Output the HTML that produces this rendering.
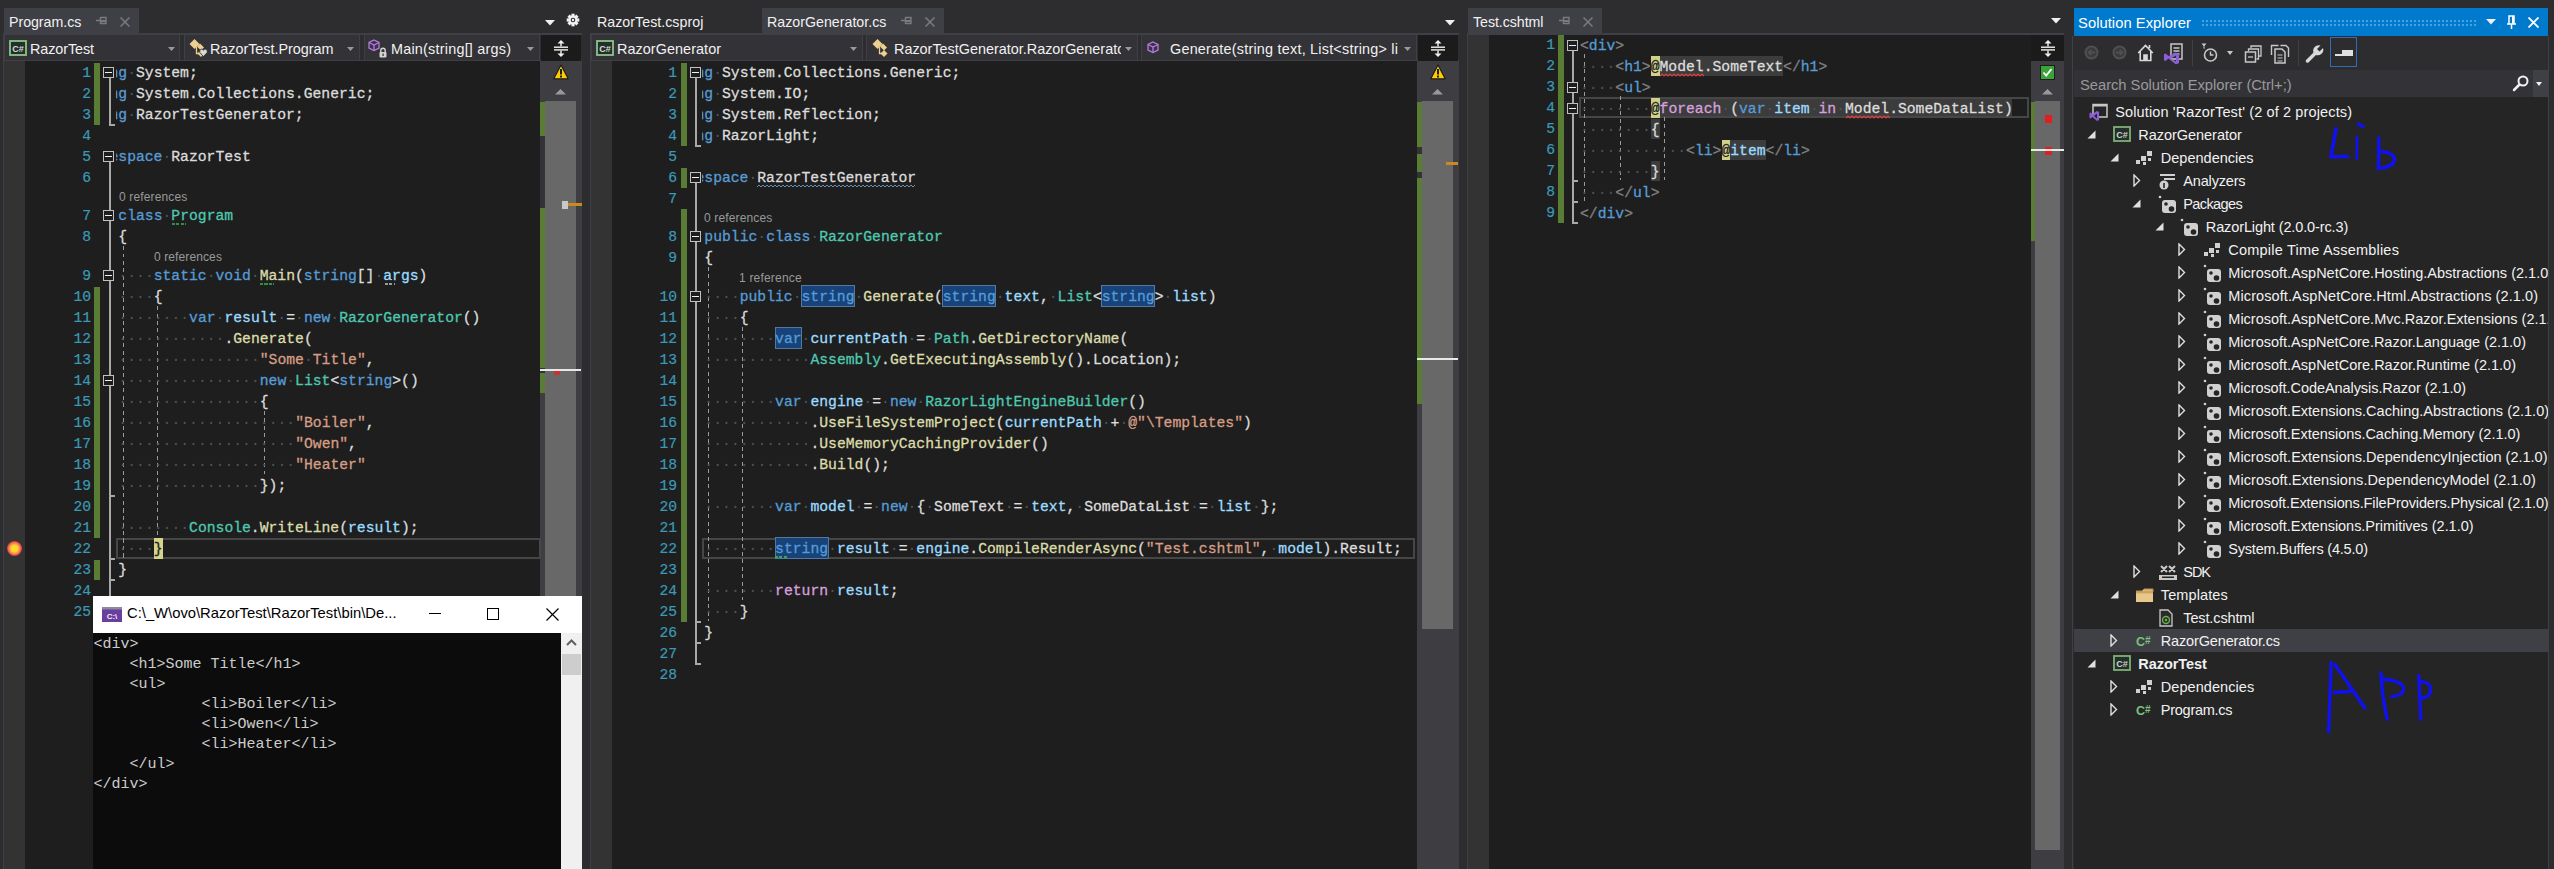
<!DOCTYPE html><html><head><meta charset="utf-8"><style>
html,body{margin:0;padding:0;}
body{width:2554px;height:869px;background:#2D2D30;position:relative;overflow:hidden;font-family:"Liberation Sans",sans-serif;}
div{box-sizing:border-box;}
.r{position:absolute;}
.clip{position:absolute;overflow:hidden;}
.cl{position:absolute;white-space:pre;font-family:"Liberation Mono",monospace;font-size:15.4px;transform:scaleX(0.95563);transform-origin:0 0;line-height:21px;height:21px;color:#DCDCDC;-webkit-text-stroke:0.3px currentColor;}
.cl i{font-style:normal;color:#4A5656;-webkit-text-stroke:0;}
.t{position:absolute;white-space:pre;line-height:1;}
.ln{position:absolute;font-family:"Liberation Mono",monospace;font-size:14.667px;line-height:21px;color:#3A9AB8;text-align:right;width:40px;-webkit-text-stroke:0.2px currentColor;}
.lens{position:absolute;white-space:pre;font-size:12px;color:#999999;line-height:1;}
</style></head><body>

<div class="r" style="left:4px;top:8px;width:135px;height:25px;background:#3F3F46;"></div>
<div class="t" style="left:9px;top:15px;font-size:14.2px;color:#F1F1F1;letter-spacing:-0.026px;">Program.cs</div>
<svg class="r" style="left:96px;top:16px;" width="11" height="9" viewBox="0 0 11 9"><path d="M0 4.5H4M4.5 1V8M4.5 1.5H10V7.5H4.5" stroke="#7A7A80" stroke-width="1.4" fill="none"/><rect x="5" y="4" width="5" height="2" fill="#7A7A80"/></svg>
<svg class="r" style="left:120px;top:17px;" width="10" height="10" viewBox="0 0 10 10"><path d="M0.5 0.5L9.5 9.5M9.5 0.5L0.5 9.5" stroke="#7A7A80" stroke-width="1.5"/></svg>
<svg class="r" style="left:545px;top:20px;" width="10" height="6" viewBox="0 0 10 6"><polygon points="0,0 10,0 5,5.5" fill="#F1F1F1"/></svg>
<svg class="r" style="left:566px;top:13px;" width="14" height="14" viewBox="0 0 14 14"><g transform="translate(7 7)"><rect x="-1.6" y="-6.3" width="3.2" height="3.5" fill="#F1F1F1" transform="rotate(0)"/><rect x="-1.6" y="-6.3" width="3.2" height="3.5" fill="#F1F1F1" transform="rotate(45)"/><rect x="-1.6" y="-6.3" width="3.2" height="3.5" fill="#F1F1F1" transform="rotate(90)"/><rect x="-1.6" y="-6.3" width="3.2" height="3.5" fill="#F1F1F1" transform="rotate(135)"/><rect x="-1.6" y="-6.3" width="3.2" height="3.5" fill="#F1F1F1" transform="rotate(180)"/><rect x="-1.6" y="-6.3" width="3.2" height="3.5" fill="#F1F1F1" transform="rotate(225)"/><rect x="-1.6" y="-6.3" width="3.2" height="3.5" fill="#F1F1F1" transform="rotate(270)"/><rect x="-1.6" y="-6.3" width="3.2" height="3.5" fill="#F1F1F1" transform="rotate(315)"/><circle r="4.4" fill="#F1F1F1"/><circle r="2.3" fill="#2D2D30"/><circle r="1.2" fill="#F1F1F1"/></g></svg>
<div class="r" style="left:4px;top:33px;width:578px;height:28px;background:#2D2D30;"></div>
<div class="r" style="left:4px;top:33px;width:578px;height:2px;background:#3F3F46;"></div>
<div class="r" style="left:4px;top:60px;width:578px;height:1px;background:#3F3F46;"></div>
<div class="r" style="left:4px;top:35px;width:176px;height:25px;background:#333337;border-left:1px solid #3F3F46;border-right:1px solid #3F3F46"></div>
<div class="r" style="left:184px;top:35px;width:176px;height:25px;background:#333337;border-left:1px solid #3F3F46;border-right:1px solid #3F3F46"></div>
<div class="r" style="left:364px;top:35px;width:176px;height:25px;background:#333337;border-left:1px solid #3F3F46;border-right:1px solid #3F3F46"></div>
<svg class="r" style="left:9px;top:40px;" width="18" height="16" viewBox="0 0 18 16"><rect x="1" y="1" width="16" height="14" fill="#23302A" stroke="#8BC48A" stroke-width="1.8"/><text x="9" y="11.5" font-family="Liberation Sans" font-size="9" font-weight="bold" fill="#D8D8D8" text-anchor="middle">C#</text></svg>
<div class="t" style="left:30px;top:42px;font-size:14.4px;color:#F1F1F1;letter-spacing:-0.098px;">RazorTest</div>
<svg class="r" style="left:168px;top:47px;" width="7" height="4" viewBox="0 0 7 4"><polygon points="0,0 7,0 3.5,4" fill="#999999"/></svg>
<svg class="r" style="left:188px;top:38px;" width="20" height="20" viewBox="0 0 20 20"><g fill="#EDD08F"><path d="M1.5 6L6.5 1L11.5 6L6.5 11Z"/><path d="M12 5.5L16 9.5L13 12.5L9 8.5Z"/><path d="M13 12L16.5 15.5L13 19L9.5 15.5Z"/></g><path d="M8.5 9V15.5H11" stroke="#EDD08F" stroke-width="1.3" fill="none"/></svg>
<svg class="r" style="left:199px;top:48px;" width="9" height="9" viewBox="0 0 9 9"><path d="M4.5 8.5L0.8 4.5Q0 2 2.2 1.2Q3.8 0.8 4.5 2.3Q5.2 0.8 6.8 1.2Q9 2 8.2 4.5Z" fill="#D8D8D8" stroke="#252526" stroke-width="0.8"/></svg>
<div class="t" style="left:210px;top:42px;font-size:14.4px;color:#F1F1F1;letter-spacing:-0.036px;">RazorTest.Program</div>
<svg class="r" style="left:347px;top:47px;" width="7" height="4" viewBox="0 0 7 4"><polygon points="0,0 7,0 3.5,4" fill="#999999"/></svg>
<svg class="r" style="left:368px;top:39px;" width="20" height="19" viewBox="0 0 20 19"><g stroke="#B180D7" stroke-width="1.3" fill="#3E2D52"><path d="M6 1L11 3.5V9L6 11.5L1 9V3.5Z"/><path d="M1 3.5L6 6L11 3.5M6 6V11.5" fill="none"/></g><rect x="11.5" y="13" width="7" height="5.5" rx="1" fill="#D4D4D4"/><path d="M12.8 13V11.5A2.2 2.2 0 0 1 17.2 11.5V13" stroke="#D4D4D4" stroke-width="1.4" fill="none"/><rect x="14.5" y="14.5" width="1.2" height="2.5" fill="#333"/></svg>
<div class="t" style="left:391px;top:42px;font-size:14.4px;color:#F1F1F1;letter-spacing:0.224px;">Main(string[] args)</div>
<svg class="r" style="left:527px;top:47px;" width="7" height="4" viewBox="0 0 7 4"><polygon points="0,0 7,0 3.5,4" fill="#999999"/></svg>
<div class="r" style="left:541px;top:35px;width:40px;height:26px;background:#1B1B1C;"></div>
<svg class="r" style="left:553.0px;top:39.5px;" width="16" height="17" viewBox="0 0 16 17"><g fill="#F1F1F1"><rect x="1" y="6.5" width="14" height="1.4"/><rect x="1" y="9.2" width="14" height="1.4"/><rect x="7.3" y="2" width="1.4" height="4.5"/><rect x="7.3" y="10.6" width="1.4" height="4.5"/><polygon points="8,0 4.5,3.5 11.5,3.5"/><polygon points="8,17 4.5,13.5 11.5,13.5"/></g></svg>
<div class="r" style="left:4px;top:61px;width:21px;height:808px;background:#333333;"></div>
<div class="r" style="left:25px;top:61px;width:515px;height:808px;background:#1E1E1E;"></div>
<div class="r" style="left:540px;top:61px;width:42px;height:808px;background:#3E3E42;"></div>
<svg class="r" style="left:553px;top:64px;" width="16" height="16" viewBox="0 0 16 16"><polygon points="8,1 15.2,14.8 0.8,14.8" fill="#FFCC00" stroke="#1E1E1E" stroke-width="1.2" stroke-linejoin="round"/><rect x="7" y="5" width="2" height="5.5" fill="#1E1E1E"/><rect x="7" y="11.5" width="2" height="2" fill="#1E1E1E"/></svg>
<svg class="r" style="left:555px;top:89px;" width="11" height="6" viewBox="0 0 11 6"><polygon points="5.5,0 11,5.5 0,5.5" fill="#999999"/></svg>
<div class="r" style="left:545px;top:101px;width:31px;height:768px;background:#686868;"></div>
<div class="r" style="left:540px;top:102px;width:5px;height:34px;background:#5A7D35;"></div>
<div class="r" style="left:540px;top:136px;width:5px;height:72px;background:#333337;"></div>
<div class="r" style="left:540px;top:208px;width:5px;height:185px;background:#5A7D35;"></div>
<div class="r" style="left:540px;top:368px;width:5px;height:5px;background:#333337;"></div>
<div class="r" style="left:562px;top:201px;width:6px;height:8px;background:#C8C8C8;"></div>
<div class="r" style="left:568px;top:203px;width:14px;height:3px;background:#CA8A1E;"></div>
<div class="r" style="left:540px;top:368.5px;width:41px;height:2px;background:#E8E8E8;"></div>
<div class="r" style="left:554px;top:371px;width:6px;height:4px;background:#C83232;"></div>
<div class="ln" style="left:51px;top:63px">1</div>
<div class="ln" style="left:51px;top:84px">2</div>
<div class="ln" style="left:51px;top:105px">3</div>
<div class="ln" style="left:51px;top:126px">4</div>
<div class="ln" style="left:51px;top:147px">5</div>
<div class="ln" style="left:51px;top:168px">6</div>
<div class="ln" style="left:51px;top:206px">7</div>
<div class="ln" style="left:51px;top:227px">8</div>
<div class="ln" style="left:51px;top:266px">9</div>
<div class="ln" style="left:51px;top:287px">10</div>
<div class="ln" style="left:51px;top:308px">11</div>
<div class="ln" style="left:51px;top:329px">12</div>
<div class="ln" style="left:51px;top:350px">13</div>
<div class="ln" style="left:51px;top:371px">14</div>
<div class="ln" style="left:51px;top:392px">15</div>
<div class="ln" style="left:51px;top:413px">16</div>
<div class="ln" style="left:51px;top:434px">17</div>
<div class="ln" style="left:51px;top:455px">18</div>
<div class="ln" style="left:51px;top:476px">19</div>
<div class="ln" style="left:51px;top:497px">20</div>
<div class="ln" style="left:51px;top:518px">21</div>
<div class="ln" style="left:51px;top:539px">22</div>
<div class="ln" style="left:51px;top:560px">23</div>
<div class="ln" style="left:51px;top:581px">24</div>
<div class="ln" style="left:51px;top:602px">25</div>
<div class="r" style="left:94px;top:62.5px;width:6px;height:62.5px;background:#5A7D35;"></div>
<div class="r" style="left:94px;top:286.5px;width:6px;height:251.5px;background:#5A7D35;"></div>
<div class="r" style="left:94px;top:559.5px;width:6px;height:20.5px;background:#5A7D35;"></div>
<div class="r" style="left:115.5px;top:538px;width:425px;height:21px;border:2px solid #464646"></div>
<div class="r" style="left:154px;top:538px;width:9px;height:21px;background:#D4D48A;"></div>
<div class="r" style="left:122.5px;top:246px;width:1.5px;height:312px;background:repeating-linear-gradient(#9A9A9A 0 4px, transparent 4px 7.5px)"></div>
<div class="r" style="left:156.5px;top:306px;width:1.5px;height:231px;background:repeating-linear-gradient(#9A9A9A 0 4px, transparent 4px 7.5px)"></div>
<div class="r" style="left:263.5px;top:411px;width:1.5px;height:63px;background:repeating-linear-gradient(#9A9A9A 0 4px, transparent 4px 7.5px)"></div>
<div class="clip" style="left:116px;top:61px;width:424px;height:808px">
<div class="cl" style="left:-32.6px;top:2px"><span style="color:#569CD6">using</span><i>·</i>System;</div>
<div class="cl" style="left:-32.6px;top:23px"><span style="color:#569CD6">using</span><i>·</i>System.Collections.Generic;</div>
<div class="cl" style="left:-32.6px;top:44px"><span style="color:#569CD6">using</span><i>·</i>RazorTestGenerator;</div>
<div class="cl" style="left:-32.6px;top:86px"><span style="color:#569CD6">namespace</span><i>·</i>RazorTest</div>
<div class="cl" style="left:-32.6px;top:107px">{</div>
<div class="cl" style="left:-32.6px;top:145px"><i>·</i><i>·</i><i>·</i><i>·</i><span style="color:#569CD6">class</span><i>·</i><span style="color:#4EC9B0">Program</span></div>
<div class="cl" style="left:-32.6px;top:166px"><i>·</i><i>·</i><i>·</i><i>·</i>{</div>
<div class="cl" style="left:-32.6px;top:205px"><i>·</i><i>·</i><i>·</i><i>·</i><i>·</i><i>·</i><i>·</i><i>·</i><span style="color:#569CD6">static</span><i>·</i><span style="color:#569CD6">void</span><i>·</i><span style="color:#DCDCAA">Main</span>(<span style="color:#569CD6">string</span>[]<i>·</i><span style="color:#9CDCFE">args</span>)</div>
<div class="cl" style="left:-32.6px;top:226px"><i>·</i><i>·</i><i>·</i><i>·</i><i>·</i><i>·</i><i>·</i><i>·</i>{</div>
<div class="cl" style="left:-32.6px;top:247px"><i>·</i><i>·</i><i>·</i><i>·</i><i>·</i><i>·</i><i>·</i><i>·</i><i>·</i><i>·</i><i>·</i><i>·</i><span style="color:#569CD6">var</span><i>·</i><span style="color:#9CDCFE">result</span><i>·</i>=<i>·</i><span style="color:#569CD6">new</span><i>·</i><span style="color:#4EC9B0">RazorGenerator</span>()</div>
<div class="cl" style="left:-32.6px;top:268px"><i>·</i><i>·</i><i>·</i><i>·</i><i>·</i><i>·</i><i>·</i><i>·</i><i>·</i><i>·</i><i>·</i><i>·</i><i>·</i><i>·</i><i>·</i><i>·</i>.<span style="color:#DCDCAA">Generate</span>(</div>
<div class="cl" style="left:-32.6px;top:289px"><i>·</i><i>·</i><i>·</i><i>·</i><i>·</i><i>·</i><i>·</i><i>·</i><i>·</i><i>·</i><i>·</i><i>·</i><i>·</i><i>·</i><i>·</i><i>·</i><i>·</i><i>·</i><i>·</i><i>·</i><span style="color:#D69D85">"Some</span><i>·</i><span style="color:#D69D85">Title"</span>,</div>
<div class="cl" style="left:-32.6px;top:310px"><i>·</i><i>·</i><i>·</i><i>·</i><i>·</i><i>·</i><i>·</i><i>·</i><i>·</i><i>·</i><i>·</i><i>·</i><i>·</i><i>·</i><i>·</i><i>·</i><i>·</i><i>·</i><i>·</i><i>·</i><span style="color:#569CD6">new</span><i>·</i><span style="color:#4EC9B0">List</span>&lt;<span style="color:#569CD6">string</span>&gt;()</div>
<div class="cl" style="left:-32.6px;top:331px"><i>·</i><i>·</i><i>·</i><i>·</i><i>·</i><i>·</i><i>·</i><i>·</i><i>·</i><i>·</i><i>·</i><i>·</i><i>·</i><i>·</i><i>·</i><i>·</i><i>·</i><i>·</i><i>·</i><i>·</i>{</div>
<div class="cl" style="left:-32.6px;top:352px"><i>·</i><i>·</i><i>·</i><i>·</i><i>·</i><i>·</i><i>·</i><i>·</i><i>·</i><i>·</i><i>·</i><i>·</i><i>·</i><i>·</i><i>·</i><i>·</i><i>·</i><i>·</i><i>·</i><i>·</i><i>·</i><i>·</i><i>·</i><i>·</i><span style="color:#D69D85">"Boiler"</span>,</div>
<div class="cl" style="left:-32.6px;top:373px"><i>·</i><i>·</i><i>·</i><i>·</i><i>·</i><i>·</i><i>·</i><i>·</i><i>·</i><i>·</i><i>·</i><i>·</i><i>·</i><i>·</i><i>·</i><i>·</i><i>·</i><i>·</i><i>·</i><i>·</i><i>·</i><i>·</i><i>·</i><i>·</i><span style="color:#D69D85">"Owen"</span>,</div>
<div class="cl" style="left:-32.6px;top:394px"><i>·</i><i>·</i><i>·</i><i>·</i><i>·</i><i>·</i><i>·</i><i>·</i><i>·</i><i>·</i><i>·</i><i>·</i><i>·</i><i>·</i><i>·</i><i>·</i><i>·</i><i>·</i><i>·</i><i>·</i><i>·</i><i>·</i><i>·</i><i>·</i><span style="color:#D69D85">"Heater"</span></div>
<div class="cl" style="left:-32.6px;top:415px"><i>·</i><i>·</i><i>·</i><i>·</i><i>·</i><i>·</i><i>·</i><i>·</i><i>·</i><i>·</i><i>·</i><i>·</i><i>·</i><i>·</i><i>·</i><i>·</i><i>·</i><i>·</i><i>·</i><i>·</i>});</div>
<div class="cl" style="left:-32.6px;top:457px"><i>·</i><i>·</i><i>·</i><i>·</i><i>·</i><i>·</i><i>·</i><i>·</i><i>·</i><i>·</i><i>·</i><i>·</i><span style="color:#4EC9B0">Console</span>.<span style="color:#DCDCAA">WriteLine</span>(<span style="color:#9CDCFE">result</span>);</div>
<div class="cl" style="left:-32.6px;top:478px"><i>·</i><i>·</i><i>·</i><i>·</i><i>·</i><i>·</i><i>·</i><i>·</i><span style="color:#1E1E1E">}</span></div>
<div class="cl" style="left:-32.6px;top:499px"><i>·</i><i>·</i><i>·</i><i>·</i>}</div>
<div class="cl" style="left:-32.6px;top:520px">}</div>
</div>
<div class="r" style="left:109px;top:77.8px;width:2px;height:46.2px;background:#A8A8A8;"></div>
<div class="r" style="left:109px;top:124px;width:5.5px;height:1.5px;background:#A8A8A8;"></div>
<div class="r" style="left:109px;top:161.8px;width:2px;height:438.2px;background:#A8A8A8;"></div>
<div class="r" style="left:109px;top:600px;width:5.5px;height:1.5px;background:#A8A8A8;"></div>
<div class="r" style="left:109px;top:220.8px;width:2px;height:358.2px;background:#A8A8A8;"></div>
<div class="r" style="left:109px;top:579px;width:5.5px;height:1.5px;background:#A8A8A8;"></div>
<div class="r" style="left:109px;top:280.8px;width:2px;height:277.2px;background:#A8A8A8;"></div>
<div class="r" style="left:109px;top:558px;width:5.5px;height:1.5px;background:#A8A8A8;"></div>
<div class="r" style="left:109px;top:385.8px;width:2px;height:109.19999999999999px;background:#A8A8A8;"></div>
<div class="r" style="left:109px;top:495px;width:5.5px;height:1.5px;background:#A8A8A8;"></div>
<div class="r" style="left:103.2px;top:66.8px;width:11px;height:11px;border:1.3px solid #C0C0C0;background:#1E1E1E"></div>
<div class="r" style="left:105.2px;top:71.55px;width:7px;height:1.5px;background:#F0F0F0;"></div>
<div class="r" style="left:103.2px;top:150.8px;width:11px;height:11px;border:1.3px solid #C0C0C0;background:#1E1E1E"></div>
<div class="r" style="left:105.2px;top:155.55px;width:7px;height:1.5px;background:#F0F0F0;"></div>
<div class="r" style="left:103.2px;top:209.8px;width:11px;height:11px;border:1.3px solid #C0C0C0;background:#1E1E1E"></div>
<div class="r" style="left:105.2px;top:214.55px;width:7px;height:1.5px;background:#F0F0F0;"></div>
<div class="r" style="left:103.2px;top:269.8px;width:11px;height:11px;border:1.3px solid #C0C0C0;background:#1E1E1E"></div>
<div class="r" style="left:105.2px;top:274.55px;width:7px;height:1.5px;background:#F0F0F0;"></div>
<div class="r" style="left:103.2px;top:374.8px;width:11px;height:11px;border:1.3px solid #C0C0C0;background:#1E1E1E"></div>
<div class="r" style="left:105.2px;top:379.55px;width:7px;height:1.5px;background:#F0F0F0;"></div>
<div class="lens" style="left:119px;top:191px;letter-spacing:0.145px;">0 references</div>
<div class="lens" style="left:154px;top:251px;letter-spacing:0.109px;">0 references</div>
<div class="r" style="left:172px;top:223px;width:14px;height:2px;background:repeating-linear-gradient(90deg,#2E9040 0 3px,transparent 3px 4.5px)"></div>
<div class="r" style="left:260px;top:283px;width:14px;height:2px;background:repeating-linear-gradient(90deg,#2E9040 0 3px,transparent 3px 4.5px)"></div>
<div class="r" style="left:385px;top:283px;width:10px;height:2px;background:repeating-linear-gradient(90deg,#9A9A9A 0 3px,transparent 3px 4.5px)"></div>
<svg class="r" style="left:6px;top:540px;" width="17" height="17" viewBox="0 0 17 17"><defs><radialGradient id="bp"><stop offset="0" stop-color="#FFE800"/><stop offset="0.45" stop-color="#FFD040"/><stop offset="0.8" stop-color="#F07050"/><stop offset="1" stop-color="#D83030"/></radialGradient></defs><circle cx="8.5" cy="8.5" r="7.5" fill="url(#bp)"/></svg>
<div class="r" style="left:93px;top:596px;width:489px;height:273px;background:#FFFFFF;"></div>
<div class="r" style="left:93px;top:633px;width:468px;height:236px;background:#0C0C0C;"></div>
<div class="r" style="left:561px;top:633px;width:21px;height:236px;background:#F0F0F0;"></div>
<svg class="r" style="left:566px;top:639px;" width="11" height="7" viewBox="0 0 11 7"><path d="M1 6L5.5 1.5L10 6" stroke="#606060" stroke-width="2" fill="none"/></svg>
<div class="r" style="left:562px;top:654px;width:19px;height:21px;background:#CDCDCD;"></div>
<svg class="r" style="left:102px;top:607px;" width="20" height="15" viewBox="0 0 20 15"><rect width="20" height="15" fill="#6A3E9E"/><rect width="20" height="2.5" fill="#8A8AA0"/><text x="10" y="12" font-family="Liberation Sans" font-size="8" font-weight="bold" fill="#F0F0F0" text-anchor="middle">C:\</text></svg>
<div class="t" style="left:127px;top:606px;font-size:14.8px;color:#000000;letter-spacing:-0.006px;">C:\_W\ovo\RazorTest\RazorTest\bin\De...</div>
<div class="r" style="left:429px;top:613px;width:12px;height:1.2px;background:#000000;"></div>
<div class="r" style="left:487px;top:608px;width:12px;height:12px;border:1.2px solid #000"></div>
<svg class="r" style="left:546px;top:608px;" width="13" height="13" viewBox="0 0 13 13"><path d="M0.5 0.5L12.5 12.5M12.5 0.5L0.5 12.5" stroke="#000000" stroke-width="1.2"/></svg>
<div class="t" style="left:93.5px;top:637px;font-family:'Liberation Mono';font-size:15px;color:#CCCCCC">&lt;div&gt;</div>
<div class="t" style="left:93.5px;top:657px;font-family:'Liberation Mono';font-size:15px;color:#CCCCCC">    &lt;h1&gt;Some Title&lt;/h1&gt;</div>
<div class="t" style="left:93.5px;top:677px;font-family:'Liberation Mono';font-size:15px;color:#CCCCCC">    &lt;ul&gt;</div>
<div class="t" style="left:93.5px;top:697px;font-family:'Liberation Mono';font-size:15px;color:#CCCCCC">            &lt;li&gt;Boiler&lt;/li&gt;</div>
<div class="t" style="left:93.5px;top:717px;font-family:'Liberation Mono';font-size:15px;color:#CCCCCC">            &lt;li&gt;Owen&lt;/li&gt;</div>
<div class="t" style="left:93.5px;top:737px;font-family:'Liberation Mono';font-size:15px;color:#CCCCCC">            &lt;li&gt;Heater&lt;/li&gt;</div>
<div class="t" style="left:93.5px;top:757px;font-family:'Liberation Mono';font-size:15px;color:#CCCCCC">    &lt;/ul&gt;</div>
<div class="t" style="left:93.5px;top:777px;font-family:'Liberation Mono';font-size:15px;color:#CCCCCC">&lt;/div&gt;</div>
<div class="t" style="left:597px;top:15px;font-size:14.2px;color:#F1F1F1;letter-spacing:0.043px;">RazorTest.csproj</div>
<div class="r" style="left:762px;top:8px;width:182px;height:25px;background:#3F3F46;"></div>
<div class="t" style="left:767px;top:15px;font-size:14.2px;color:#F1F1F1;letter-spacing:0.020px;">RazorGenerator.cs</div>
<svg class="r" style="left:901px;top:16px;" width="11" height="9" viewBox="0 0 11 9"><path d="M0 4.5H4M4.5 1V8M4.5 1.5H10V7.5H4.5" stroke="#7A7A80" stroke-width="1.4" fill="none"/><rect x="5" y="4" width="5" height="2" fill="#7A7A80"/></svg>
<svg class="r" style="left:925px;top:17px;" width="10" height="10" viewBox="0 0 10 10"><path d="M0.5 0.5L9.5 9.5M9.5 0.5L0.5 9.5" stroke="#7A7A80" stroke-width="1.5"/></svg>
<svg class="r" style="left:1445px;top:20px;" width="10" height="6" viewBox="0 0 10 6"><polygon points="0,0 10,0 5,5.5" fill="#F1F1F1"/></svg>
<div class="r" style="left:591px;top:33px;width:868px;height:28px;background:#2D2D30;"></div>
<div class="r" style="left:591px;top:33px;width:868px;height:2px;background:#3F3F46;"></div>
<div class="r" style="left:591px;top:60px;width:868px;height:1px;background:#3F3F46;"></div>
<div class="r" style="left:591px;top:35px;width:272px;height:25px;background:#333337;border-left:1px solid #3F3F46;border-right:1px solid #3F3F46"></div>
<div class="r" style="left:866px;top:35px;width:272px;height:25px;background:#333337;border-left:1px solid #3F3F46;border-right:1px solid #3F3F46"></div>
<div class="r" style="left:1141px;top:35px;width:276px;height:25px;background:#333337;border-left:1px solid #3F3F46;border-right:1px solid #3F3F46"></div>
<svg class="r" style="left:596px;top:40px;" width="18" height="16" viewBox="0 0 18 16"><rect x="1" y="1" width="16" height="14" fill="#23302A" stroke="#8BC48A" stroke-width="1.8"/><text x="9" y="11.5" font-family="Liberation Sans" font-size="9" font-weight="bold" fill="#D8D8D8" text-anchor="middle">C#</text></svg>
<div class="t" style="left:617px;top:42px;font-size:14.4px;color:#F1F1F1;letter-spacing:0.062px;">RazorGenerator</div>
<svg class="r" style="left:850px;top:47px;" width="7" height="4" viewBox="0 0 7 4"><polygon points="0,0 7,0 3.5,4" fill="#999999"/></svg>
<svg class="r" style="left:871px;top:38px;" width="20" height="20" viewBox="0 0 20 20"><g fill="#EDD08F"><path d="M1.5 6L6.5 1L11.5 6L6.5 11Z"/><path d="M12 5.5L16 9.5L13 12.5L9 8.5Z"/><path d="M13 12L16.5 15.5L13 19L9.5 15.5Z"/></g><path d="M8.5 9V15.5H11" stroke="#EDD08F" stroke-width="1.3" fill="none"/></svg>
<div class="clip" style="left:894px;top:38px;width:227px;height:20px">
<div class="t" style="left:0px;top:4px;font-size:14.4px;color:#F1F1F1;">RazorTestGenerator.RazorGeneratc</div>
</div>
<svg class="r" style="left:1125px;top:47px;" width="7" height="4" viewBox="0 0 7 4"><polygon points="0,0 7,0 3.5,4" fill="#999999"/></svg>
<svg class="r" style="left:1147px;top:41px;" width="20" height="19" viewBox="0 0 20 19"><g stroke="#B180D7" stroke-width="1.3" fill="#3E2D52"><path d="M6 1L11 3.5V9L6 11.5L1 9V3.5Z"/><path d="M1 3.5L6 6L11 3.5M6 6V11.5" fill="none"/></g></svg>
<div class="t" style="left:1170px;top:42px;font-size:14.4px;color:#F1F1F1;letter-spacing:0.223px;">Generate(string text, List&lt;string&gt; li</div>
<svg class="r" style="left:1404px;top:47px;" width="7" height="4" viewBox="0 0 7 4"><polygon points="0,0 7,0 3.5,4" fill="#999999"/></svg>
<div class="r" style="left:1418px;top:35px;width:40px;height:26px;background:#1B1B1C;"></div>
<svg class="r" style="left:1430.0px;top:39.5px;" width="16" height="17" viewBox="0 0 16 17"><g fill="#F1F1F1"><rect x="1" y="6.5" width="14" height="1.4"/><rect x="1" y="9.2" width="14" height="1.4"/><rect x="7.3" y="2" width="1.4" height="4.5"/><rect x="7.3" y="10.6" width="1.4" height="4.5"/><polygon points="8,0 4.5,3.5 11.5,3.5"/><polygon points="8,17 4.5,13.5 11.5,13.5"/></g></svg>
<div class="r" style="left:591px;top:61px;width:21px;height:808px;background:#333333;"></div>
<div class="r" style="left:612px;top:61px;width:805px;height:808px;background:#1E1E1E;"></div>
<div class="r" style="left:1417px;top:61px;width:42px;height:808px;background:#3E3E42;"></div>
<svg class="r" style="left:1430px;top:64px;" width="16" height="16" viewBox="0 0 16 16"><polygon points="8,1 15.2,14.8 0.8,14.8" fill="#FFCC00" stroke="#1E1E1E" stroke-width="1.2" stroke-linejoin="round"/><rect x="7" y="5" width="2" height="5.5" fill="#1E1E1E"/><rect x="7" y="11.5" width="2" height="2" fill="#1E1E1E"/></svg>
<svg class="r" style="left:1432px;top:89px;" width="11" height="6" viewBox="0 0 11 6"><polygon points="5.5,0 11,5.5 0,5.5" fill="#999999"/></svg>
<div class="r" style="left:1422px;top:101px;width:31px;height:528px;background:#686868;"></div>
<div class="r" style="left:1417px;top:102px;width:5px;height:302px;background:#5A7D35;"></div>
<div class="r" style="left:1417px;top:147px;width:5px;height:7px;background:#333337;"></div>
<div class="r" style="left:1417px;top:172px;width:5px;height:6px;background:#333337;"></div>
<div class="r" style="left:1446px;top:162px;width:12px;height:3px;background:#CA8A1E;"></div>
<div class="r" style="left:1417px;top:358px;width:41px;height:2px;background:#E8E8E8;"></div>
<div class="ln" style="left:637px;top:63px">1</div>
<div class="ln" style="left:637px;top:84px">2</div>
<div class="ln" style="left:637px;top:105px">3</div>
<div class="ln" style="left:637px;top:126px">4</div>
<div class="ln" style="left:637px;top:147px">5</div>
<div class="ln" style="left:637px;top:168px">6</div>
<div class="ln" style="left:637px;top:189px">7</div>
<div class="ln" style="left:637px;top:227px">8</div>
<div class="ln" style="left:637px;top:248px">9</div>
<div class="ln" style="left:637px;top:287px">10</div>
<div class="ln" style="left:637px;top:308px">11</div>
<div class="ln" style="left:637px;top:329px">12</div>
<div class="ln" style="left:637px;top:350px">13</div>
<div class="ln" style="left:637px;top:371px">14</div>
<div class="ln" style="left:637px;top:392px">15</div>
<div class="ln" style="left:637px;top:413px">16</div>
<div class="ln" style="left:637px;top:434px">17</div>
<div class="ln" style="left:637px;top:455px">18</div>
<div class="ln" style="left:637px;top:476px">19</div>
<div class="ln" style="left:637px;top:497px">20</div>
<div class="ln" style="left:637px;top:518px">21</div>
<div class="ln" style="left:637px;top:539px">22</div>
<div class="ln" style="left:637px;top:560px">23</div>
<div class="ln" style="left:637px;top:581px">24</div>
<div class="ln" style="left:637px;top:602px">25</div>
<div class="ln" style="left:637px;top:623px">26</div>
<div class="ln" style="left:637px;top:644px">27</div>
<div class="ln" style="left:637px;top:665px">28</div>
<div class="r" style="left:681px;top:62.5px;width:6px;height:83.5px;background:#5A7D35;"></div>
<div class="r" style="left:681px;top:167.5px;width:6px;height:20.5px;background:#5A7D35;"></div>
<div class="r" style="left:681px;top:226.5px;width:6px;height:395.5px;background:#5A7D35;"></div>
<div class="r" style="left:681px;top:209px;width:6px;height:18px;background:#5A7D35;"></div>
<div class="r" style="left:702px;top:538px;width:713px;height:21px;border:2px solid #464646"></div>
<div class="r" style="left:801px;top:285px;width:54px;height:22px;background:#17427A;border:1px solid #56779E"></div>
<div class="r" style="left:942.2px;top:285px;width:54px;height:22px;background:#17427A;border:1px solid #56779E"></div>
<div class="r" style="left:1101.2px;top:285px;width:54px;height:22px;background:#17427A;border:1px solid #56779E"></div>
<div class="r" style="left:774.5px;top:327px;width:27.5px;height:22px;background:#17427A;border:1px solid #56779E"></div>
<div class="r" style="left:774.5px;top:537px;width:54px;height:22px;background:#17427A;border:1px solid #56779E"></div>
<div class="r" style="left:707.5px;top:267px;width:1.5px;height:354px;background:repeating-linear-gradient(#9A9A9A 0 4px, transparent 4px 7.5px)"></div>
<div class="r" style="left:741.5px;top:327px;width:1.5px;height:273px;background:repeating-linear-gradient(#9A9A9A 0 4px, transparent 4px 7.5px)"></div>
<div class="clip" style="left:702px;top:61px;width:715px;height:808px">
<div class="cl" style="left:-33.5px;top:2px"><span style="color:#569CD6">using</span><i>·</i>System.Collections.Generic;</div>
<div class="cl" style="left:-33.5px;top:23px"><span style="color:#569CD6">using</span><i>·</i>System.IO;</div>
<div class="cl" style="left:-33.5px;top:44px"><span style="color:#569CD6">using</span><i>·</i>System.Reflection;</div>
<div class="cl" style="left:-33.5px;top:65px"><span style="color:#569CD6">using</span><i>·</i>RazorLight;</div>
<div class="cl" style="left:-33.5px;top:107px"><span style="color:#569CD6">namespace</span><i>·</i>RazorTestGenerator</div>
<div class="cl" style="left:-33.5px;top:128px">{</div>
<div class="cl" style="left:-33.5px;top:166px"><i>·</i><i>·</i><i>·</i><i>·</i><span style="color:#569CD6">public</span><i>·</i><span style="color:#569CD6">class</span><i>·</i><span style="color:#4EC9B0">RazorGenerator</span></div>
<div class="cl" style="left:-33.5px;top:187px"><i>·</i><i>·</i><i>·</i><i>·</i>{</div>
<div class="cl" style="left:-33.5px;top:226px"><i>·</i><i>·</i><i>·</i><i>·</i><i>·</i><i>·</i><i>·</i><i>·</i><span style="color:#569CD6">public</span><i>·</i><span style="color:#569CD6">string</span><i>·</i><span style="color:#DCDCAA">Generate</span>(<span style="color:#569CD6">string</span><i>·</i><span style="color:#9CDCFE">text</span>,<i>·</i><span style="color:#4EC9B0">List</span>&lt;<span style="color:#569CD6">string</span>&gt;<i>·</i><span style="color:#9CDCFE">list</span>)</div>
<div class="cl" style="left:-33.5px;top:247px"><i>·</i><i>·</i><i>·</i><i>·</i><i>·</i><i>·</i><i>·</i><i>·</i>{</div>
<div class="cl" style="left:-33.5px;top:268px"><i>·</i><i>·</i><i>·</i><i>·</i><i>·</i><i>·</i><i>·</i><i>·</i><i>·</i><i>·</i><i>·</i><i>·</i><span style="color:#569CD6">var</span><i>·</i><span style="color:#9CDCFE">currentPath</span><i>·</i>=<i>·</i><span style="color:#4EC9B0">Path</span>.<span style="color:#DCDCAA">GetDirectoryName</span>(</div>
<div class="cl" style="left:-33.5px;top:289px"><i>·</i><i>·</i><i>·</i><i>·</i><i>·</i><i>·</i><i>·</i><i>·</i><i>·</i><i>·</i><i>·</i><i>·</i><i>·</i><i>·</i><i>·</i><i>·</i><span style="color:#4EC9B0">Assembly</span>.<span style="color:#DCDCAA">GetExecutingAssembly</span>().Location);</div>
<div class="cl" style="left:-33.5px;top:331px"><i>·</i><i>·</i><i>·</i><i>·</i><i>·</i><i>·</i><i>·</i><i>·</i><i>·</i><i>·</i><i>·</i><i>·</i><span style="color:#569CD6">var</span><i>·</i><span style="color:#9CDCFE">engine</span><i>·</i>=<i>·</i><span style="color:#569CD6">new</span><i>·</i><span style="color:#4EC9B0">RazorLightEngineBuilder</span>()</div>
<div class="cl" style="left:-33.5px;top:352px"><i>·</i><i>·</i><i>·</i><i>·</i><i>·</i><i>·</i><i>·</i><i>·</i><i>·</i><i>·</i><i>·</i><i>·</i><i>·</i><i>·</i><i>·</i><i>·</i>.<span style="color:#DCDCAA">UseFileSystemProject</span>(<span style="color:#9CDCFE">currentPath</span><i>·</i>+<i>·</i><span style="color:#D69D85">@"\Templates"</span>)</div>
<div class="cl" style="left:-33.5px;top:373px"><i>·</i><i>·</i><i>·</i><i>·</i><i>·</i><i>·</i><i>·</i><i>·</i><i>·</i><i>·</i><i>·</i><i>·</i><i>·</i><i>·</i><i>·</i><i>·</i>.<span style="color:#DCDCAA">UseMemoryCachingProvider</span>()</div>
<div class="cl" style="left:-33.5px;top:394px"><i>·</i><i>·</i><i>·</i><i>·</i><i>·</i><i>·</i><i>·</i><i>·</i><i>·</i><i>·</i><i>·</i><i>·</i><i>·</i><i>·</i><i>·</i><i>·</i>.<span style="color:#DCDCAA">Build</span>();</div>
<div class="cl" style="left:-33.5px;top:436px"><i>·</i><i>·</i><i>·</i><i>·</i><i>·</i><i>·</i><i>·</i><i>·</i><i>·</i><i>·</i><i>·</i><i>·</i><span style="color:#569CD6">var</span><i>·</i><span style="color:#9CDCFE">model</span><i>·</i>=<i>·</i><span style="color:#569CD6">new</span><i>·</i>{<i>·</i>SomeText<i>·</i>=<i>·</i><span style="color:#9CDCFE">text</span>,<i>·</i>SomeDataList<i>·</i>=<i>·</i><span style="color:#9CDCFE">list</span><i>·</i>};</div>
<div class="cl" style="left:-33.5px;top:478px"><i>·</i><i>·</i><i>·</i><i>·</i><i>·</i><i>·</i><i>·</i><i>·</i><i>·</i><i>·</i><i>·</i><i>·</i><span style="color:#569CD6">string</span><i>·</i><span style="color:#9CDCFE">result</span><i>·</i>=<i>·</i><span style="color:#9CDCFE">engine</span>.<span style="color:#DCDCAA">CompileRenderAsync</span>(<span style="color:#D69D85">"Test.cshtml"</span>,<i>·</i><span style="color:#9CDCFE">model</span>).Result;</div>
<div class="cl" style="left:-33.5px;top:520px"><i>·</i><i>·</i><i>·</i><i>·</i><i>·</i><i>·</i><i>·</i><i>·</i><i>·</i><i>·</i><i>·</i><i>·</i><span style="color:#D8A0DF">return</span><i>·</i><span style="color:#9CDCFE">result</span>;</div>
<div class="cl" style="left:-33.5px;top:541px"><i>·</i><i>·</i><i>·</i><i>·</i><i>·</i><i>·</i><i>·</i><i>·</i>}</div>
<div class="cl" style="left:-33.5px;top:562px"><i>·</i><i>·</i><i>·</i><i>·</i>}</div>
<div class="cl" style="left:-33.5px;top:583px">}</div>
</div>
<div class="r" style="left:695px;top:77.8px;width:2px;height:67.2px;background:#A8A8A8;"></div>
<div class="r" style="left:695px;top:145px;width:5.5px;height:1.5px;background:#A8A8A8;"></div>
<div class="r" style="left:695px;top:182.8px;width:2px;height:480.2px;background:#A8A8A8;"></div>
<div class="r" style="left:695px;top:663px;width:5.5px;height:1.5px;background:#A8A8A8;"></div>
<div class="r" style="left:695px;top:241.8px;width:2px;height:400.2px;background:#A8A8A8;"></div>
<div class="r" style="left:695px;top:642px;width:5.5px;height:1.5px;background:#A8A8A8;"></div>
<div class="r" style="left:695px;top:301.8px;width:2px;height:319.2px;background:#A8A8A8;"></div>
<div class="r" style="left:695px;top:621px;width:5.5px;height:1.5px;background:#A8A8A8;"></div>
<div class="r" style="left:690.0px;top:66.8px;width:11px;height:11px;border:1.3px solid #C0C0C0;background:#1E1E1E"></div>
<div class="r" style="left:692.0px;top:71.55px;width:7px;height:1.5px;background:#F0F0F0;"></div>
<div class="r" style="left:690.0px;top:171.8px;width:11px;height:11px;border:1.3px solid #C0C0C0;background:#1E1E1E"></div>
<div class="r" style="left:692.0px;top:176.55px;width:7px;height:1.5px;background:#F0F0F0;"></div>
<div class="r" style="left:690.0px;top:230.8px;width:11px;height:11px;border:1.3px solid #C0C0C0;background:#1E1E1E"></div>
<div class="r" style="left:692.0px;top:235.55px;width:7px;height:1.5px;background:#F0F0F0;"></div>
<div class="r" style="left:690.0px;top:290.8px;width:11px;height:11px;border:1.3px solid #C0C0C0;background:#1E1E1E"></div>
<div class="r" style="left:692.0px;top:295.55px;width:7px;height:1.5px;background:#F0F0F0;"></div>
<div class="lens" style="left:704px;top:212px;letter-spacing:0.145px;">0 references</div>
<div class="lens" style="left:739px;top:272px;letter-spacing:0.190px;">1 reference</div>
<svg class="r" style="left:757px;top:184px" width="160" height="4"><path d="M0 3 L2 1 L4 3 L6 1 L8 3 L10 1 L12 3 L14 1 L16 3 L18 1 L20 3 L22 1 L24 3 L26 1 L28 3 L30 1 L32 3 L34 1 L36 3 L38 1 L40 3 L42 1 L44 3 L46 1 L48 3 L50 1 L52 3 L54 1 L56 3 L58 1 L60 3 L62 1 L64 3 L66 1 L68 3 L70 1 L72 3 L74 1 L76 3 L78 1 L80 3 L82 1 L84 3 L86 1 L88 3 L90 1 L92 3 L94 1 L96 3 L98 1 L100 3 L102 1 L104 3 L106 1 L108 3 L110 1 L112 3 L114 1 L116 3 L118 1 L120 3 L122 1 L124 3 L126 1 L128 3 L130 1 L132 3 L134 1 L136 3 L138 1 L140 3 L142 1 L144 3 L146 1 L148 3 L150 1 L152 3 L154 1 L156 3 L158 1" stroke="#6A8FB5" stroke-width="1" fill="none"/></svg>
<div class="r" style="left:775px;top:556px;width:12px;height:2px;background:repeating-linear-gradient(90deg,#34A853 0 3px,transparent 3px 4.5px)"></div>
<div class="r" style="left:1468px;top:8px;width:134px;height:25px;background:#3F3F46;"></div>
<div class="t" style="left:1473px;top:15px;font-size:14.2px;color:#F1F1F1;letter-spacing:-0.045px;">Test.cshtml</div>
<svg class="r" style="left:1559px;top:16px;" width="11" height="9" viewBox="0 0 11 9"><path d="M0 4.5H4M4.5 1V8M4.5 1.5H10V7.5H4.5" stroke="#7A7A80" stroke-width="1.4" fill="none"/><rect x="5" y="4" width="5" height="2" fill="#7A7A80"/></svg>
<svg class="r" style="left:1583px;top:17px;" width="10" height="10" viewBox="0 0 10 10"><path d="M0.5 0.5L9.5 9.5M9.5 0.5L0.5 9.5" stroke="#7A7A80" stroke-width="1.5"/></svg>
<svg class="r" style="left:2051px;top:18px;" width="10" height="6" viewBox="0 0 10 6"><polygon points="0,0 10,0 5,5.5" fill="#F1F1F1"/></svg>
<div class="r" style="left:1468px;top:33px;width:21px;height:836px;background:#333333;"></div>
<div class="r" style="left:1489px;top:33px;width:542px;height:836px;background:#1E1E1E;"></div>
<div class="r" style="left:2031px;top:33px;width:33px;height:836px;background:#3E3E42;"></div>
<div class="r" style="left:1468px;top:33px;width:596px;height:2px;background:#3F3F46;"></div>
<div class="r" style="left:2031px;top:35px;width:33px;height:26px;background:#1B1B1C;"></div>
<svg class="r" style="left:2039.5px;top:39.5px;" width="16" height="17" viewBox="0 0 16 17"><g fill="#F1F1F1"><rect x="1" y="6.5" width="14" height="1.4"/><rect x="1" y="9.2" width="14" height="1.4"/><rect x="7.3" y="2" width="1.4" height="4.5"/><rect x="7.3" y="10.6" width="1.4" height="4.5"/><polygon points="8,0 4.5,3.5 11.5,3.5"/><polygon points="8,17 4.5,13.5 11.5,13.5"/></g></svg>
<svg class="r" style="left:2040px;top:65px;" width="15" height="15" viewBox="0 0 15 15"><rect x="0.5" y="0.5" width="14" height="14" fill="#3AA33A" stroke="#1E1E1E"/><path d="M3.5 7.5L6.2 10.5L11.5 4" stroke="#FFFFFF" stroke-width="1.8" fill="none"/></svg>
<svg class="r" style="left:2042px;top:89px;" width="11" height="6" viewBox="0 0 11 6"><polygon points="5.5,0 11,5.5 0,5.5" fill="#999999"/></svg>
<div class="r" style="left:2035px;top:101px;width:25px;height:749px;background:#686868;"></div>
<div class="r" style="left:2031px;top:102px;width:4px;height:139px;background:#5A7D35;"></div>
<div class="r" style="left:2045px;top:115px;width:7px;height:8px;background:#E02020;"></div>
<div class="r" style="left:2045px;top:147px;width:7px;height:8px;background:#E02020;"></div>
<div class="r" style="left:2031px;top:149px;width:33px;height:2px;background:#E8E8E8;"></div>
<div class="ln" style="left:1515px;top:35px">1</div>
<div class="ln" style="left:1515px;top:56px">2</div>
<div class="ln" style="left:1515px;top:77px">3</div>
<div class="ln" style="left:1515px;top:98px">4</div>
<div class="ln" style="left:1515px;top:119px">5</div>
<div class="ln" style="left:1515px;top:140px">6</div>
<div class="ln" style="left:1515px;top:161px">7</div>
<div class="ln" style="left:1515px;top:182px">8</div>
<div class="ln" style="left:1515px;top:203px">9</div>
<div class="r" style="left:1558px;top:34.5px;width:6px;height:188.5px;background:#5A7D35;"></div>
<div class="r" style="left:1650.9px;top:56px;width:132.5px;height:20px;background:#3C3C3C;"></div>
<div class="r" style="left:1650.9px;top:98px;width:362.2px;height:20px;background:#3C3C3C;"></div>
<div class="r" style="left:1579px;top:97px;width:450px;height:21px;border:2px solid #464646"></div>
<div class="r" style="left:2012px;top:99px;width:15px;height:17px;background:#1E1E1E;"></div>
<div class="r" style="left:1650.9px;top:119px;width:8.83px;height:20px;background:#3C3C3C;"></div>
<div class="r" style="left:1650.9px;top:161px;width:8.83px;height:20px;background:#3C3C3C;"></div>
<div class="r" style="left:1730.4px;top:140px;width:35.3px;height:20px;background:#3C3C3C;"></div>
<div class="r" style="left:1650.9px;top:56px;width:8.83px;height:20px;background:#D0D08A;"></div>
<div class="r" style="left:1650.9px;top:98px;width:8.83px;height:20px;background:#D0D08A;"></div>
<div class="r" style="left:1721.6px;top:140px;width:8.83px;height:20px;background:#D0D08A;"></div>
<div class="r" style="left:1583.5px;top:54px;width:1.5px;height:147px;background:repeating-linear-gradient(#9A9A9A 0 4px, transparent 4px 7.5px)"></div>
<div class="r" style="left:1619.5px;top:96px;width:1.5px;height:84px;background:repeating-linear-gradient(#9A9A9A 0 4px, transparent 4px 7.5px)"></div>
<div class="r" style="left:1663.5px;top:117px;width:1.5px;height:63px;background:repeating-linear-gradient(#9A9A9A 0 4px, transparent 4px 7.5px)"></div>
<div class="clip" style="left:1579px;top:33px;width:452px;height:836px">
<div class="cl" style="left:1.3px;top:3px"><span style="color:#808080">&lt;</span><span style="color:#569CD6">div</span><span style="color:#808080">&gt;</span></div>
<div class="cl" style="left:1.3px;top:24px"><i>·</i><i>·</i><i>·</i><i>·</i><span style="color:#808080">&lt;</span><span style="color:#569CD6">h1</span><span style="color:#808080">&gt;</span><span style="color:#1E1E1E">@</span>Model.SomeText<span style="color:#808080">&lt;/</span><span style="color:#569CD6">h1</span><span style="color:#808080">&gt;</span></div>
<div class="cl" style="left:1.3px;top:45px"><i>·</i><i>·</i><i>·</i><i>·</i><span style="color:#808080">&lt;</span><span style="color:#569CD6">ul</span><span style="color:#808080">&gt;</span></div>
<div class="cl" style="left:1.3px;top:66px"><i>·</i><i>·</i><i>·</i><i>·</i><i>·</i><i>·</i><i>·</i><i>·</i><span style="color:#1E1E1E">@</span><span style="color:#D8A0DF">foreach</span><i>·</i>(<span style="color:#569CD6">var</span><i>·</i><span style="color:#9CDCFE">item</span><i>·</i><span style="color:#D8A0DF">in</span><i>·</i>Model.SomeDataList)</div>
<div class="cl" style="left:1.3px;top:87px"><i>·</i><i>·</i><i>·</i><i>·</i><i>·</i><i>·</i><i>·</i><i>·</i>{</div>
<div class="cl" style="left:1.3px;top:108px"><i>·</i><i>·</i><i>·</i><i>·</i><i>·</i><i>·</i><i>·</i><i>·</i><i>·</i><i>·</i><i>·</i><i>·</i><span style="color:#808080">&lt;</span><span style="color:#569CD6">li</span><span style="color:#808080">&gt;</span><span style="color:#1E1E1E">@</span><span style="color:#9CDCFE">item</span><span style="color:#808080">&lt;/</span><span style="color:#569CD6">li</span><span style="color:#808080">&gt;</span></div>
<div class="cl" style="left:1.3px;top:129px"><i>·</i><i>·</i><i>·</i><i>·</i><i>·</i><i>·</i><i>·</i><i>·</i>}</div>
<div class="cl" style="left:1.3px;top:150px"><i>·</i><i>·</i><i>·</i><i>·</i><span style="color:#808080">&lt;/</span><span style="color:#569CD6">ul</span><span style="color:#808080">&gt;</span></div>
<div class="cl" style="left:1.3px;top:171px"><span style="color:#808080">&lt;/</span><span style="color:#569CD6">div</span><span style="color:#808080">&gt;</span></div>
</div>
<div class="r" style="left:1572px;top:50.8px;width:2px;height:171.2px;background:#A8A8A8;"></div>
<div class="r" style="left:1572px;top:222px;width:5.5px;height:1.5px;background:#A8A8A8;"></div>
<div class="r" style="left:1572px;top:92.8px;width:2px;height:108.2px;background:#A8A8A8;"></div>
<div class="r" style="left:1572px;top:201px;width:5.5px;height:1.5px;background:#A8A8A8;"></div>
<div class="r" style="left:1572px;top:113.8px;width:2px;height:66.2px;background:#A8A8A8;"></div>
<div class="r" style="left:1572px;top:180px;width:5.5px;height:1.5px;background:#A8A8A8;"></div>
<div class="r" style="left:1567.0px;top:39.8px;width:11px;height:11px;border:1.3px solid #C0C0C0;background:#1E1E1E"></div>
<div class="r" style="left:1569.0px;top:44.55px;width:7px;height:1.5px;background:#F0F0F0;"></div>
<div class="r" style="left:1567.0px;top:81.8px;width:11px;height:11px;border:1.3px solid #C0C0C0;background:#1E1E1E"></div>
<div class="r" style="left:1569.0px;top:86.55px;width:7px;height:1.5px;background:#F0F0F0;"></div>
<div class="r" style="left:1567.0px;top:102.8px;width:11px;height:11px;border:1.3px solid #C0C0C0;background:#1E1E1E"></div>
<div class="r" style="left:1569.0px;top:107.55px;width:7px;height:1.5px;background:#F0F0F0;"></div>
<svg class="r" style="left:1660px;top:73px" width="44" height="4"><path d="M0 3 L2 1 L4 3 L6 1 L8 3 L10 1 L12 3 L14 1 L16 3 L18 1 L20 3 L22 1 L24 3 L26 1 L28 3 L30 1 L32 3 L34 1 L36 3 L38 1 L40 3 L42 1 L44 3" stroke="#E04040" stroke-width="1.2" fill="none"/></svg>
<svg class="r" style="left:1845.5px;top:115px" width="44" height="4"><path d="M0 3 L2 1 L4 3 L6 1 L8 3 L10 1 L12 3 L14 1 L16 3 L18 1 L20 3 L22 1 L24 3 L26 1 L28 3 L30 1 L32 3 L34 1 L36 3 L38 1 L40 3 L42 1 L44 3" stroke="#E04040" stroke-width="1.2" fill="none"/></svg>
<div class="r" style="left:2074px;top:8px;width:474px;height:28px;background:#007ACC;"></div>
<div class="t" style="left:2078px;top:16px;font-size:14.75px;color:#FFFFFF;letter-spacing:0.042px;">Solution Explorer</div>
<div class="r" style="left:2201px;top:19px;width:275px;height:7px;background-image:radial-gradient(circle,#4AA3E0 0.8px,transparent 1px);background-size:4px 4px"></div>
<svg class="r" style="left:2486px;top:19px;" width="10" height="6" viewBox="0 0 10 6"><polygon points="0,0 10,0 5,5.5" fill="#F1F1F1"/></svg>
<svg class="r" style="left:2506px;top:15px;" width="11" height="15" viewBox="0 0 11 15"><path d="M3 1H8V9H3ZM1 9H10M5.5 9V14" stroke="#FFFFFF" stroke-width="1.5" fill="none"/><rect x="6" y="1" width="2" height="8" fill="#FFFFFF"/></svg>
<svg class="r" style="left:2528px;top:17px;" width="11" height="11" viewBox="0 0 11 11"><path d="M0.5 0.5L10.5 10.5M10.5 0.5L0.5 10.5" stroke="#FFFFFF" stroke-width="1.8"/></svg>
<div class="r" style="left:2074px;top:36px;width:474px;height:34px;background:#2D2D30;"></div>
<svg class="r" style="left:2084px;top:45px;" width="15" height="15" viewBox="0 0 15 15"><circle cx="7.5" cy="7.5" r="7" fill="#505052"/><circle cx="7.5" cy="7.5" r="5" fill="#3A3A3C"/><path d="M11 7.5H4.5M7.2 4.8L4.5 7.5L7.2 10.2" stroke="#505052" stroke-width="1.8" fill="none"/></svg>
<svg class="r" style="left:2112px;top:45px;" width="15" height="15" viewBox="0 0 15 15"><circle cx="7.5" cy="7.5" r="7" fill="#505052"/><circle cx="7.5" cy="7.5" r="5" fill="#3A3A3C"/><path d="M4 7.5H10.5M7.8 4.8L10.5 7.5L7.8 10.2" stroke="#505052" stroke-width="1.8" fill="none"/></svg>
<svg class="r" style="left:2137px;top:43px;" width="17" height="19" viewBox="0 0 17 19"><path d="M1.2 10L8.5 2.5L15.8 10M3.2 8.5V17.5H13.8V8.5M7 17.5V12H10V17.5M12.5 5V2" stroke="#D8D8D8" stroke-width="1.6" fill="none"/><rect x="7" y="12" width="3" height="5.5" fill="#D8D8D8"/></svg>
<svg class="r" style="left:2163px;top:43px;" width="21" height="21" viewBox="0 0 21 21"><rect x="8" y="1" width="11" height="15" fill="#2D2D30" stroke="#C8C8C8" stroke-width="1.5"/><path d="M10.5 5H16.5M10.5 8H16.5M10.5 11H16.5" stroke="#C8C8C8" stroke-width="1.3"/><path d="M13 9.5L16 11V20L13 21.5L5.5 15.5L2.5 18L1 17.2V11.3L2.5 10.5L5.5 13L13 9.5ZM13 12.5L8 15.5L13 18.5Z" fill="#8B5FD8" fill-rule="evenodd"/></svg>
<div class="r" style="left:2192px;top:40px;width:1px;height:26px;background:#3F3F46;"></div>
<svg class="r" style="left:2200px;top:42px;" width="22" height="21" viewBox="0 0 22 21"><path d="M1.5 1.5H6.5L4.5 4V7L3.5 6.5V4Z" fill="#C8C8C8"/><circle cx="10.5" cy="13" r="6" stroke="#C8C8C8" stroke-width="1.6" fill="none"/><path d="M10.5 9.5V13H13.5" stroke="#C8C8C8" stroke-width="1.4" fill="none"/></svg>
<svg class="r" style="left:2227px;top:51px;" width="6" height="4" viewBox="0 0 6 4"><polygon points="0,0 6,0 3.0,4" fill="#C8C8C8"/></svg>
<svg class="r" style="left:2244px;top:44px;" width="18" height="19" viewBox="0 0 18 19"><path d="M7 4V2H17V12H15" stroke="#C8C8C8" stroke-width="1.3" fill="none"/><path d="M4.5 7V5H14.5V15H12.5" stroke="#C8C8C8" stroke-width="1.3" fill="none"/><rect x="1.5" y="8" width="10" height="10" stroke="#C8C8C8" stroke-width="1.5" fill="#2D2D30"/><path d="M4 13H9" stroke="#C8C8C8" stroke-width="1.3"/></svg>
<svg class="r" style="left:2270px;top:43px;" width="20" height="21" viewBox="0 0 20 21"><path d="M1.5 12V2.5H8.5M10.5 2.5H16L18.5 5V14" stroke="#C8C8C8" stroke-width="1.4" fill="none"/><path d="M5 6H12L15 9V20H5Z" stroke="#C8C8C8" stroke-width="1.5" fill="#2D2D30"/><path d="M7.5 12H12.5M7.5 15H12.5M7.5 18H12.5" stroke="#C8C8C8" stroke-width="1.2"/></svg>
<div class="r" style="left:2298px;top:40px;width:1px;height:26px;background:#3F3F46;"></div>
<svg class="r" style="left:2305px;top:44px;" width="20" height="19" viewBox="0 0 20 19"><path d="M2.5 17L10.5 9" stroke="#D8D8D8" stroke-width="3.4" stroke-linecap="round"/><path d="M9 9.5A5.5 5.5 0 0 1 15.5 1.5L12 5L14.5 7.5L18 4A5.5 5.5 0 0 1 10 10.5Z" fill="#D8D8D8"/></svg>
<div class="r" style="left:2330px;top:37px;width:27px;height:30px;border:1px solid #2F6DB5;background:#2D2D30"></div>
<div class="r" style="left:2335px;top:53.5px;width:18px;height:2px;background:#E0E0E0;"></div>
<div class="r" style="left:2342px;top:50px;width:11px;height:5.5px;background:#E0E0E0;"></div>
<div class="r" style="left:2074px;top:70px;width:474px;height:27px;background:#333337;"></div>
<div class="t" style="left:2080px;top:77.5px;font-size:14.75px;color:#999999;letter-spacing:-0.035px;">Search Solution Explorer (Ctrl+;)</div>
<div class="r" style="left:2533px;top:70px;width:15px;height:27px;background:#3F3F46;"></div>
<svg class="r" style="left:2512px;top:75px;" width="17" height="17" viewBox="0 0 17 17"><circle cx="11" cy="6" r="4.5" stroke="#F1F1F1" stroke-width="2" fill="none"/><path d="M7.5 9.5L2 15" stroke="#F1F1F1" stroke-width="2.5" stroke-linecap="round"/></svg>
<svg class="r" style="left:2536px;top:82px;" width="6" height="4" viewBox="0 0 6 4"><polygon points="0,0 6,0 3.0,4" fill="#F1F1F1"/></svg>
<div class="r" style="left:2074px;top:97px;width:474px;height:772px;background:#252526;"></div>
<div class="r" style="left:2074px;top:629px;width:474px;height:23px;background:#3F3F46;"></div>
<svg class="r" style="left:2089px;top:103px;" width="19" height="18" viewBox="0 0 19 18"><path d="M4 12V1.5H18V14H9" stroke="#C8C8C8" stroke-width="1.5" fill="none"/><rect x="4" y="1" width="14" height="2.5" fill="#C8C8C8"/><path d="M8 8L10 9V17L8 18L3.5 14L1.5 15.5L0.5 15V10L1.5 9.5L3.5 11Z" fill="#8B5FD8"/><path d="M8 10.5L5 13L8 15.5Z" fill="#252526"/></svg>
<div class="t" style="left:2115.2px;top:105px;font-size:14.5px;color:#F1F1F1;letter-spacing:0.130px;">Solution 'RazorTest' (2 of 2 projects)</div>
<svg class="r" style="left:2087.0px;top:130px;" width="9" height="9" viewBox="0 0 9 9"><polygon points="8.5,0.5 8.5,8.5 0.5,8.5" fill="#E0E0E0"/></svg>
<svg class="r" style="left:2112.6px;top:126px;" width="19" height="18" viewBox="0 0 19 18"><rect x="1" y="1" width="16" height="14" fill="#23302A" stroke="#7FB07A" stroke-width="1.8"/><text x="9" y="11.5" font-family="Liberation Sans" font-size="9" font-weight="bold" fill="#D0D0D0" text-anchor="middle">C#</text></svg>
<div class="t" style="left:2138.3px;top:128px;font-size:14.5px;color:#F1F1F1;letter-spacing:-0.036px;">RazorGenerator</div>
<svg class="r" style="left:2109.5px;top:153px;" width="9" height="9" viewBox="0 0 9 9"><polygon points="8.5,0.5 8.5,8.5 0.5,8.5" fill="#E0E0E0"/></svg>
<svg class="r" style="left:2135.1px;top:149px;" width="19" height="18" viewBox="0 0 19 18"><g fill="#D0D0D0"><rect x="12" y="2" width="5" height="5"/><rect x="6" y="7" width="5" height="5"/><rect x="1" y="11" width="4" height="4"/><rect x="8" y="13" width="3" height="3"/><rect x="13" y="9" width="3" height="3"/></g></svg>
<div class="t" style="left:2160.8px;top:151px;font-size:14.5px;color:#F1F1F1;letter-spacing:0.007px;">Dependencies</div>
<svg class="r" style="left:2132.5px;top:173.5px;" width="8" height="13" viewBox="0 0 8 13"><polygon points="1,1 6.5,6.5 1,12" fill="none" stroke="#E0E0E0" stroke-width="1.4"/></svg>
<svg class="r" style="left:2157.6px;top:172px;" width="19" height="18" viewBox="0 0 19 18"><g fill="#D0D0D0"><rect x="2" y="2" width="15" height="2"/><rect x="6" y="6" width="11" height="2"/><circle cx="6" cy="13" r="4.5"/></g><rect x="5.2" y="11" width="1.6" height="5" fill="#252526"/></svg>
<div class="t" style="left:2183.3px;top:174px;font-size:14.5px;color:#F1F1F1;letter-spacing:-0.171px;">Analyzers</div>
<svg class="r" style="left:2132.0px;top:199px;" width="9" height="9" viewBox="0 0 9 9"><polygon points="8.5,0.5 8.5,8.5 0.5,8.5" fill="#E0E0E0"/></svg>
<svg class="r" style="left:2157.6px;top:195px;" width="19" height="18" viewBox="0 0 19 18"><circle cx="2" cy="2" r="1.3" fill="#D0D0D0"/><rect x="4" y="5" width="14" height="13" rx="3" fill="#D0D0D0"/><circle cx="8" cy="9" r="1.8" fill="#252526"/><circle cx="13.5" cy="14" r="2.8" fill="#252526"/></svg>
<div class="t" style="left:2183.3px;top:197px;font-size:14.5px;color:#F1F1F1;letter-spacing:-0.613px;">Packages</div>
<svg class="r" style="left:2154.5px;top:222px;" width="9" height="9" viewBox="0 0 9 9"><polygon points="8.5,0.5 8.5,8.5 0.5,8.5" fill="#E0E0E0"/></svg>
<svg class="r" style="left:2180.1px;top:218px;" width="19" height="18" viewBox="0 0 19 18"><circle cx="2" cy="2" r="1.3" fill="#D0D0D0"/><rect x="4" y="5" width="14" height="13" rx="3" fill="#D0D0D0"/><circle cx="8" cy="9" r="1.8" fill="#252526"/><circle cx="13.5" cy="14" r="2.8" fill="#252526"/></svg>
<div class="t" style="left:2205.8px;top:220px;font-size:14.5px;color:#F1F1F1;letter-spacing:-0.116px;">RazorLight (2.0.0-rc.3)</div>
<svg class="r" style="left:2177.5px;top:242.5px;" width="8" height="13" viewBox="0 0 8 13"><polygon points="1,1 6.5,6.5 1,12" fill="none" stroke="#E0E0E0" stroke-width="1.4"/></svg>
<svg class="r" style="left:2202.6px;top:241px;" width="19" height="18" viewBox="0 0 19 18"><g fill="#D0D0D0"><rect x="12" y="2" width="5" height="5"/><rect x="6" y="7" width="5" height="5"/><rect x="1" y="11" width="4" height="4"/><rect x="8" y="13" width="3" height="3"/><rect x="13" y="9" width="3" height="3"/></g></svg>
<div class="t" style="left:2228.3px;top:243px;font-size:14.5px;color:#F1F1F1;letter-spacing:0.209px;">Compile Time Assemblies</div>
<svg class="r" style="left:2177.5px;top:265.5px;" width="8" height="13" viewBox="0 0 8 13"><polygon points="1,1 6.5,6.5 1,12" fill="none" stroke="#E0E0E0" stroke-width="1.4"/></svg>
<svg class="r" style="left:2202.6px;top:264px;" width="19" height="18" viewBox="0 0 19 18"><circle cx="2" cy="2" r="1.3" fill="#D0D0D0"/><rect x="4" y="5" width="14" height="13" rx="3" fill="#D0D0D0"/><circle cx="8" cy="9" r="1.8" fill="#252526"/><circle cx="13.5" cy="14" r="2.8" fill="#252526"/></svg>
<div class="t" style="left:2228.3px;top:266px;font-size:14.5px;color:#F1F1F1;">Microsoft.AspNetCore.Hosting.Abstractions (2.1.0)</div>
<svg class="r" style="left:2177.5px;top:288.5px;" width="8" height="13" viewBox="0 0 8 13"><polygon points="1,1 6.5,6.5 1,12" fill="none" stroke="#E0E0E0" stroke-width="1.4"/></svg>
<svg class="r" style="left:2202.6px;top:287px;" width="19" height="18" viewBox="0 0 19 18"><circle cx="2" cy="2" r="1.3" fill="#D0D0D0"/><rect x="4" y="5" width="14" height="13" rx="3" fill="#D0D0D0"/><circle cx="8" cy="9" r="1.8" fill="#252526"/><circle cx="13.5" cy="14" r="2.8" fill="#252526"/></svg>
<div class="t" style="left:2228.3px;top:289px;font-size:14.5px;color:#F1F1F1;letter-spacing:0.098px;">Microsoft.AspNetCore.Html.Abstractions (2.1.0)</div>
<svg class="r" style="left:2177.5px;top:311.5px;" width="8" height="13" viewBox="0 0 8 13"><polygon points="1,1 6.5,6.5 1,12" fill="none" stroke="#E0E0E0" stroke-width="1.4"/></svg>
<svg class="r" style="left:2202.6px;top:310px;" width="19" height="18" viewBox="0 0 19 18"><circle cx="2" cy="2" r="1.3" fill="#D0D0D0"/><rect x="4" y="5" width="14" height="13" rx="3" fill="#D0D0D0"/><circle cx="8" cy="9" r="1.8" fill="#252526"/><circle cx="13.5" cy="14" r="2.8" fill="#252526"/></svg>
<div class="t" style="left:2228.3px;top:312px;font-size:14.5px;color:#F1F1F1;">Microsoft.AspNetCore.Mvc.Razor.Extensions (2.1.0)</div>
<svg class="r" style="left:2177.5px;top:334.5px;" width="8" height="13" viewBox="0 0 8 13"><polygon points="1,1 6.5,6.5 1,12" fill="none" stroke="#E0E0E0" stroke-width="1.4"/></svg>
<svg class="r" style="left:2202.6px;top:333px;" width="19" height="18" viewBox="0 0 19 18"><circle cx="2" cy="2" r="1.3" fill="#D0D0D0"/><rect x="4" y="5" width="14" height="13" rx="3" fill="#D0D0D0"/><circle cx="8" cy="9" r="1.8" fill="#252526"/><circle cx="13.5" cy="14" r="2.8" fill="#252526"/></svg>
<div class="t" style="left:2228.3px;top:335px;font-size:14.5px;color:#F1F1F1;letter-spacing:-0.012px;">Microsoft.AspNetCore.Razor.Language (2.1.0)</div>
<svg class="r" style="left:2177.5px;top:357.5px;" width="8" height="13" viewBox="0 0 8 13"><polygon points="1,1 6.5,6.5 1,12" fill="none" stroke="#E0E0E0" stroke-width="1.4"/></svg>
<svg class="r" style="left:2202.6px;top:356px;" width="19" height="18" viewBox="0 0 19 18"><circle cx="2" cy="2" r="1.3" fill="#D0D0D0"/><rect x="4" y="5" width="14" height="13" rx="3" fill="#D0D0D0"/><circle cx="8" cy="9" r="1.8" fill="#252526"/><circle cx="13.5" cy="14" r="2.8" fill="#252526"/></svg>
<div class="t" style="left:2228.3px;top:358px;font-size:14.5px;color:#F1F1F1;letter-spacing:0.000px;">Microsoft.AspNetCore.Razor.Runtime (2.1.0)</div>
<svg class="r" style="left:2177.5px;top:380.5px;" width="8" height="13" viewBox="0 0 8 13"><polygon points="1,1 6.5,6.5 1,12" fill="none" stroke="#E0E0E0" stroke-width="1.4"/></svg>
<svg class="r" style="left:2202.6px;top:379px;" width="19" height="18" viewBox="0 0 19 18"><circle cx="2" cy="2" r="1.3" fill="#D0D0D0"/><rect x="4" y="5" width="14" height="13" rx="3" fill="#D0D0D0"/><circle cx="8" cy="9" r="1.8" fill="#252526"/><circle cx="13.5" cy="14" r="2.8" fill="#252526"/></svg>
<div class="t" style="left:2228.3px;top:381px;font-size:14.5px;color:#F1F1F1;letter-spacing:-0.064px;">Microsoft.CodeAnalysis.Razor (2.1.0)</div>
<svg class="r" style="left:2177.5px;top:403.5px;" width="8" height="13" viewBox="0 0 8 13"><polygon points="1,1 6.5,6.5 1,12" fill="none" stroke="#E0E0E0" stroke-width="1.4"/></svg>
<svg class="r" style="left:2202.6px;top:402px;" width="19" height="18" viewBox="0 0 19 18"><circle cx="2" cy="2" r="1.3" fill="#D0D0D0"/><rect x="4" y="5" width="14" height="13" rx="3" fill="#D0D0D0"/><circle cx="8" cy="9" r="1.8" fill="#252526"/><circle cx="13.5" cy="14" r="2.8" fill="#252526"/></svg>
<div class="t" style="left:2228.3px;top:404px;font-size:14.5px;color:#F1F1F1;">Microsoft.Extensions.Caching.Abstractions (2.1.0)</div>
<svg class="r" style="left:2177.5px;top:426.5px;" width="8" height="13" viewBox="0 0 8 13"><polygon points="1,1 6.5,6.5 1,12" fill="none" stroke="#E0E0E0" stroke-width="1.4"/></svg>
<svg class="r" style="left:2202.6px;top:425px;" width="19" height="18" viewBox="0 0 19 18"><circle cx="2" cy="2" r="1.3" fill="#D0D0D0"/><rect x="4" y="5" width="14" height="13" rx="3" fill="#D0D0D0"/><circle cx="8" cy="9" r="1.8" fill="#252526"/><circle cx="13.5" cy="14" r="2.8" fill="#252526"/></svg>
<div class="t" style="left:2228.3px;top:427px;font-size:14.5px;color:#F1F1F1;letter-spacing:-0.032px;">Microsoft.Extensions.Caching.Memory (2.1.0)</div>
<svg class="r" style="left:2177.5px;top:449.5px;" width="8" height="13" viewBox="0 0 8 13"><polygon points="1,1 6.5,6.5 1,12" fill="none" stroke="#E0E0E0" stroke-width="1.4"/></svg>
<svg class="r" style="left:2202.6px;top:448px;" width="19" height="18" viewBox="0 0 19 18"><circle cx="2" cy="2" r="1.3" fill="#D0D0D0"/><rect x="4" y="5" width="14" height="13" rx="3" fill="#D0D0D0"/><circle cx="8" cy="9" r="1.8" fill="#252526"/><circle cx="13.5" cy="14" r="2.8" fill="#252526"/></svg>
<div class="t" style="left:2228.3px;top:450px;font-size:14.5px;color:#F1F1F1;">Microsoft.Extensions.DependencyInjection (2.1.0)</div>
<svg class="r" style="left:2177.5px;top:472.5px;" width="8" height="13" viewBox="0 0 8 13"><polygon points="1,1 6.5,6.5 1,12" fill="none" stroke="#E0E0E0" stroke-width="1.4"/></svg>
<svg class="r" style="left:2202.6px;top:471px;" width="19" height="18" viewBox="0 0 19 18"><circle cx="2" cy="2" r="1.3" fill="#D0D0D0"/><rect x="4" y="5" width="14" height="13" rx="3" fill="#D0D0D0"/><circle cx="8" cy="9" r="1.8" fill="#252526"/><circle cx="13.5" cy="14" r="2.8" fill="#252526"/></svg>
<div class="t" style="left:2228.3px;top:473px;font-size:14.5px;color:#F1F1F1;letter-spacing:0.066px;">Microsoft.Extensions.DependencyModel (2.1.0)</div>
<svg class="r" style="left:2177.5px;top:495.5px;" width="8" height="13" viewBox="0 0 8 13"><polygon points="1,1 6.5,6.5 1,12" fill="none" stroke="#E0E0E0" stroke-width="1.4"/></svg>
<svg class="r" style="left:2202.6px;top:494px;" width="19" height="18" viewBox="0 0 19 18"><circle cx="2" cy="2" r="1.3" fill="#D0D0D0"/><rect x="4" y="5" width="14" height="13" rx="3" fill="#D0D0D0"/><circle cx="8" cy="9" r="1.8" fill="#252526"/><circle cx="13.5" cy="14" r="2.8" fill="#252526"/></svg>
<div class="t" style="left:2228.3px;top:496px;font-size:14.5px;color:#F1F1F1;letter-spacing:-0.120px;">Microsoft.Extensions.FileProviders.Physical (2.1.0)</div>
<svg class="r" style="left:2177.5px;top:518.5px;" width="8" height="13" viewBox="0 0 8 13"><polygon points="1,1 6.5,6.5 1,12" fill="none" stroke="#E0E0E0" stroke-width="1.4"/></svg>
<svg class="r" style="left:2202.6px;top:517px;" width="19" height="18" viewBox="0 0 19 18"><circle cx="2" cy="2" r="1.3" fill="#D0D0D0"/><rect x="4" y="5" width="14" height="13" rx="3" fill="#D0D0D0"/><circle cx="8" cy="9" r="1.8" fill="#252526"/><circle cx="13.5" cy="14" r="2.8" fill="#252526"/></svg>
<div class="t" style="left:2228.3px;top:519px;font-size:14.5px;color:#F1F1F1;letter-spacing:-0.036px;">Microsoft.Extensions.Primitives (2.1.0)</div>
<svg class="r" style="left:2177.5px;top:541.5px;" width="8" height="13" viewBox="0 0 8 13"><polygon points="1,1 6.5,6.5 1,12" fill="none" stroke="#E0E0E0" stroke-width="1.4"/></svg>
<svg class="r" style="left:2202.6px;top:540px;" width="19" height="18" viewBox="0 0 19 18"><circle cx="2" cy="2" r="1.3" fill="#D0D0D0"/><rect x="4" y="5" width="14" height="13" rx="3" fill="#D0D0D0"/><circle cx="8" cy="9" r="1.8" fill="#252526"/><circle cx="13.5" cy="14" r="2.8" fill="#252526"/></svg>
<div class="t" style="left:2228.3px;top:542px;font-size:14.5px;color:#F1F1F1;letter-spacing:-0.204px;">System.Buffers (4.5.0)</div>
<svg class="r" style="left:2132.5px;top:564.5px;" width="8" height="13" viewBox="0 0 8 13"><polygon points="1,1 6.5,6.5 1,12" fill="none" stroke="#E0E0E0" stroke-width="1.4"/></svg>
<svg class="r" style="left:2157.6px;top:563px;" width="19" height="18" viewBox="0 0 19 18"><g fill="#C8C8C8"><rect x="1" y="12" width="18" height="5"/><path d="M3 3L9 9M9 3L3 9M11 3L17 9M17 3L11 9" stroke="#C8C8C8" stroke-width="2"/></g><rect x="4" y="13.5" width="12" height="1.5" fill="#252526"/></svg>
<div class="t" style="left:2183.3px;top:565px;font-size:14.5px;color:#F1F1F1;letter-spacing:-1.064px;">SDK</div>
<svg class="r" style="left:2109.5px;top:590px;" width="9" height="9" viewBox="0 0 9 9"><polygon points="8.5,0.5 8.5,8.5 0.5,8.5" fill="#E0E0E0"/></svg>
<svg class="r" style="left:2135.1px;top:586px;" width="19" height="18" viewBox="0 0 19 18"><path d="M1 5H7L9 3H18V16H1Z" fill="#DCB67A"/><path d="M1 8H18V16H1Z" fill="#E8C88A"/><path d="M1 5H7L9 3H18V6H1" fill="none" stroke="#B8924A" stroke-width="1"/></svg>
<div class="t" style="left:2160.8px;top:588px;font-size:14.5px;color:#F1F1F1;letter-spacing:0.101px;">Templates</div>
<svg class="r" style="left:2157.6px;top:609px;" width="19" height="18" viewBox="0 0 19 18"><path d="M2 1H10L14 5V17H2Z" fill="#2A2A2A" stroke="#C8C8C8" stroke-width="1.3"/><circle cx="8" cy="11" r="3.5" stroke="#6AB04A" stroke-width="1.4" fill="none"/><circle cx="8" cy="11" r="1.3" fill="#6AB04A"/></svg>
<div class="t" style="left:2183.3px;top:611px;font-size:14.5px;color:#F1F1F1;letter-spacing:-0.132px;">Test.cshtml</div>
<svg class="r" style="left:2110.0px;top:633.5px;" width="8" height="13" viewBox="0 0 8 13"><polygon points="1,1 6.5,6.5 1,12" fill="none" stroke="#E0E0E0" stroke-width="1.4"/></svg>
<svg class="r" style="left:2135.1px;top:632px;" width="19" height="18" viewBox="0 0 19 18"><text x="1" y="14" font-family="Liberation Sans" font-size="12.5" font-weight="bold" fill="#7CC07C">C</text><text x="10" y="12" font-family="Liberation Sans" font-size="10" font-weight="bold" fill="#7CC07C">#</text></svg>
<div class="t" style="left:2160.8px;top:634px;font-size:14.5px;color:#F1F1F1;letter-spacing:-0.156px;">RazorGenerator.cs</div>
<svg class="r" style="left:2087.0px;top:659px;" width="9" height="9" viewBox="0 0 9 9"><polygon points="8.5,0.5 8.5,8.5 0.5,8.5" fill="#E0E0E0"/></svg>
<svg class="r" style="left:2112.6px;top:655px;" width="19" height="18" viewBox="0 0 19 18"><rect x="1" y="1" width="16" height="14" fill="#23302A" stroke="#7FB07A" stroke-width="1.8"/><text x="9" y="11.5" font-family="Liberation Sans" font-size="9" font-weight="bold" fill="#D0D0D0" text-anchor="middle">C#</text></svg>
<div class="t" style="left:2138.3px;top:657px;font-size:14.5px;color:#F1F1F1;font-weight:bold;letter-spacing:-0.066px;">RazorTest</div>
<svg class="r" style="left:2110.0px;top:679.5px;" width="8" height="13" viewBox="0 0 8 13"><polygon points="1,1 6.5,6.5 1,12" fill="none" stroke="#E0E0E0" stroke-width="1.4"/></svg>
<svg class="r" style="left:2135.1px;top:678px;" width="19" height="18" viewBox="0 0 19 18"><g fill="#D0D0D0"><rect x="12" y="2" width="5" height="5"/><rect x="6" y="7" width="5" height="5"/><rect x="1" y="11" width="4" height="4"/><rect x="8" y="13" width="3" height="3"/><rect x="13" y="9" width="3" height="3"/></g></svg>
<div class="t" style="left:2160.8px;top:680px;font-size:14.5px;color:#F1F1F1;letter-spacing:0.062px;">Dependencies</div>
<svg class="r" style="left:2110.0px;top:702.5px;" width="8" height="13" viewBox="0 0 8 13"><polygon points="1,1 6.5,6.5 1,12" fill="none" stroke="#E0E0E0" stroke-width="1.4"/></svg>
<svg class="r" style="left:2135.1px;top:701px;" width="19" height="18" viewBox="0 0 19 18"><text x="1" y="14" font-family="Liberation Sans" font-size="12.5" font-weight="bold" fill="#7CC07C">C</text><text x="10" y="12" font-family="Liberation Sans" font-size="10" font-weight="bold" fill="#7CC07C">#</text></svg>
<div class="t" style="left:2160.8px;top:703px;font-size:14.5px;color:#F1F1F1;letter-spacing:-0.260px;">Program.cs</div>
<div class="r" style="left:2548px;top:0px;width:6px;height:869px;background:#2D2D30;"></div>
<div class="r" style="left:590px;top:33px;width:1px;height:836px;background:#3F3F46;"></div>
<div class="r" style="left:2548px;top:36px;width:1px;height:833px;background:#3F3F46;"></div>
<div class="r" style="left:1467px;top:33px;width:1px;height:836px;background:#3F3F46;"></div>
<div class="r" style="left:2072px;top:36px;width:1px;height:833px;background:#3F3F46;"></div>
<div class="r" style="left:3px;top:33px;width:1px;height:836px;background:#3F3F46;"></div>
<svg class="r" style="left:2320px;top:115px" width="90" height="60"><g stroke="#1010F5" fill="none" stroke-linecap="round" stroke-linejoin="round"><path d="M16 13.5L11 41.7L28 41.5" stroke-width="3.6"/><path d="M38.5 9L43 11.5" stroke-width="3.4"/><path d="M37 21.6L36.7 44" stroke-width="2.6"/><path d="M58.8 23L58.5 54M59 36Q72 37 74.5 43Q75 51 62 53" stroke-width="3.4"/></g></svg>
<svg class="r" style="left:2318px;top:655px" width="125" height="85"><g stroke="#1010F5" stroke-width="3.3" fill="none" stroke-linecap="round" stroke-linejoin="round"><path d="M10.6 76.8L13.2 7.4M16.9 9.5L46.9 53M16.3 37.5L33.4 36.4"/><path d="M62.9 17.8Q64 40 69 64M64.5 24Q80 25 85 31Q88 40 73.8 41.6"/><path d="M100.7 20.4L102.8 64M101.8 26.1Q110 27 112 31Q115 41 103.8 43.2"/></g></svg>
</body></html>
